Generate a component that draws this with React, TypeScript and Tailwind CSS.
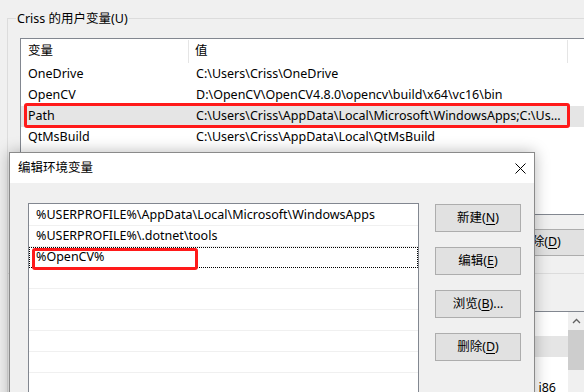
import React from "react";

const font = { fontFamily: '"Noto Sans", "Noto Sans CJK SC", sans-serif' };

function U({ c }: { c: string }) {
  return <span className="underline underline-offset-2">{c}</span>;
}

function Btn({ children }: { children: React.ReactNode }) {
  return (
    <div className="h-[28px] w-[86px] border border-[#adadad] bg-[#e1e1e1] flex items-center justify-center text-black">
      {children}
    </div>
  );
}

export default function App() {
  const bgRows = [
    { n: "OneDrive", v: "C:\\Users\\Criss\\OneDrive" },
    { n: "OpenCV", v: "D:\\OpenCV\\OpenCV4.8.0\\opencv\\build\\x64\\vc16\\bin" },
    { n: "Path", v: "C:\\Users\\Criss\\AppData\\Local\\Microsoft\\WindowsApps;C:\\Us...", sel: true },
    { n: "QtMsBuild", v: "C:\\Users\\Criss\\AppData\\Local\\QtMsBuild" },
  ];
  const dlgRows = [
    "%USERPROFILE%\\AppData\\Local\\Microsoft\\WindowsApps",
    "%USERPROFILE%\\.dotnet\\tools",
    "%OpenCV%",
    "",
    "",
    "",
    "",
    "",
    "",
  ];
  return (
    <div className="relative w-[584px] h-[392px] overflow-hidden bg-[#f0f0f0] text-[12.5px] text-black" style={font}>
      {/* background window */}
      <div className="ml-[7px] mt-[18px] h-[400px] border-l border-t border-[#dcdcdc]">
        <div className="-mt-[9px] ml-[8px] w-fit bg-[#f0f0f0] px-[1px] h-[18px] leading-[18px]">
          Criss 的用户变量(U)
        </div>
        <div className="ml-[12px] mt-[10px] h-[177px] border-l border-t border-b border-[#828790] bg-white">
          <div className="flex h-[25px]">
            <div className="w-[168px] pl-[7px] flex items-center border-r border-[#e5e5e5] my-[1px]">变量</div>
            <div className="w-[379px] pl-[6px] flex items-center border-r border-[#e5e5e5] my-[1px]">值</div>
          </div>
          {bgRows.map((r) => (
            <div key={r.n} className={`relative flex h-[21px] items-center ${r.sel ? "bg-[#e5e5e5]" : ""}`}>
              <div className="w-[169px] pl-[7px] whitespace-nowrap">{r.n}</div>
              <div className="pl-[6px] whitespace-nowrap">{r.v}</div>
              {r.sel && (
                <div className="absolute left-[3px] top-[-3px] w-[546px] h-[25px] border-[3px] border-[#ff1a1a] rounded-[3px]" />
              )}
            </div>
          ))}
        </div>
        <div className="flex justify-end mt-[14px]">
          <div className="h-[27px] w-[92px] mr-[-2px] border border-[#adadad] bg-[#e1e1e1] flex items-center justify-center">
            删除(<U c="D" />)
          </div>
        </div>
        <div className="mt-[17px] h-[38px] border-t border-[#dcdcdc]" />
        <div className="ml-[12px] h-[100px] border-l border-t border-[#828790] bg-white flex">
          <div className="flex-1 flex flex-col">
            <div className="h-[24px]" />
            <div className="h-[21px] bg-[#e5e5e5]" />
            <div className="h-[21px]" />
            <div className="h-[21px] flex items-center justify-end pr-[12px]">i86</div>
          </div>
          <div className="w-[16px] bg-[#f0f0f0] flex flex-col items-center">
            <div className="h-[18px] flex items-center">
              <svg width="9" height="6" viewBox="0 0 9 6">
                <path d="M1 5 L4.5 1.5 L8 5" stroke="#606060" strokeWidth="1.3" fill="none" />
              </svg>
            </div>
            <div className="w-[16px] h-[40px] bg-[#cdcdcd]" />
          </div>
        </div>
      </div>

      {/* dialog */}
      <div className="absolute left-[9px] top-[152px] w-[526px] h-[260px] border border-[#8a8a8a] bg-[#f0f0f0] shadow-[0_0_14px_rgba(0,0,0,0.28)]">
        <div className="h-[30px] bg-white flex items-center justify-between">
          <div className="pl-[8px]">编辑环境变量</div>
          <div className="w-[28px] flex items-center justify-center">
            <svg width="11" height="11" viewBox="0 0 11 11">
              <path d="M0.5 0.5 L10.5 10.5 M10.5 0.5 L0.5 10.5" stroke="#000" strokeWidth="1" />
            </svg>
          </div>
        </div>
        <div className="flex pt-[20px] pl-[18px]">
          <div className="w-[391px] h-[220px] border border-[#828790] bg-white pt-[1px]">
            {dlgRows.map((t, i) => (
              <div
                key={i}
                className={`relative h-[21px] pl-[7px] flex items-center whitespace-nowrap ${
                  i === 2 ? "outline outline-1 outline-dotted outline-black -outline-offset-1" : "border-b border-[#f0f0f0]"
                }`}
              >
                {t}
                {i === 2 && (
                  <div className="absolute left-[3px] top-[1px] w-[166px] h-[22px] border-[3px] border-[#ff1a1a] rounded-[3px]" />
                )}
              </div>
            ))}
          </div>
          <div className="ml-[16px] mt-[1px] flex flex-col gap-[15px]">
            <Btn>
              新建(<U c="N" />)
            </Btn>
            <Btn>
              编辑(<U c="E" />)
            </Btn>
            <Btn>
              浏览(<U c="B" />)...
            </Btn>
            <Btn>
              删除(<U c="D" />)
            </Btn>
          </div>
        </div>
      </div>
    </div>
  );
}
